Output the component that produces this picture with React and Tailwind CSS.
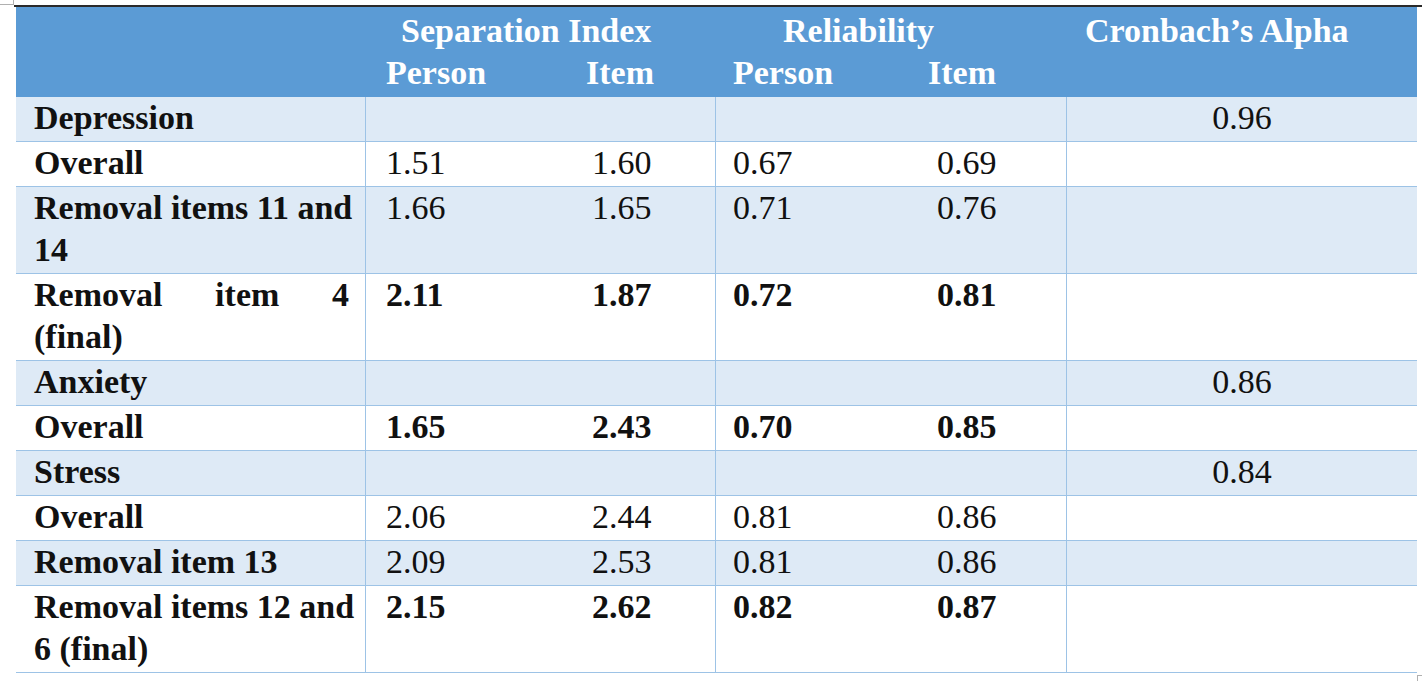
import React from 'react';

const rows = [
  { label: ['Depression'], light: true, alpha: '0.96' },
  { label: ['Overall'], vals: ['1.51', '1.60', '0.67', '0.69'] },
  { label: ['Removal items 11 and', '14'], light: true, vals: ['1.66', '1.65', '0.71', '0.76'] },
  { label: ['Removal item 4', '(final)'], justify: true, bold: true, vals: ['2.11', '1.87', '0.72', '0.81'] },
  { label: ['Anxiety'], light: true, alpha: '0.86' },
  { label: ['Overall'], bold: true, vals: ['1.65', '2.43', '0.70', '0.85'] },
  { label: ['Stress'], light: true, alpha: '0.84' },
  { label: ['Overall'], vals: ['2.06', '2.44', '0.81', '0.86'] },
  { label: ['Removal item 13'], light: true, vals: ['2.09', '2.53', '0.81', '0.86'] },
  { label: ['Removal items 12 and', '6 (final)'], bold: true, vals: ['2.15', '2.62', '0.82', '0.87'] },
];

const Row = ({ row }) => {
  const numClass = row.bold ? 'font-bold' : 'font-normal';
  return (
    <div className={`flex border-b border-[#9dc3e6] ${row.light ? 'bg-[#deeaf6]' : 'bg-white'}`}>
      {/* Label */}
      <div className="w-[350px] shrink-0 border-r border-[#9dc3e6] pl-[18px] pr-[16px] pb-[2px] font-bold">
        {row.justify ? (
          <>
            <div className="flex justify-between">
              <span>Removal</span>
              <span>item</span>
              <span>4</span>
            </div>
            <div>{row.label[1]}</div>
          </>
        ) : (
          row.label.map((l, i) => (
            <div key={i} className="whitespace-nowrap">{l}</div>
          ))
        )}
      </div>

      {/* Separation Index */}
      <div className={`w-[350px] shrink-0 border-r border-[#9dc3e6] pb-[2px] flex pl-[20px] ${numClass}`}>
        {row.vals && (
          <>
            <span className="w-[206px]">{row.vals[0]}</span>
            <span>{row.vals[1]}</span>
          </>
        )}
      </div>

      {/* Reliability */}
      <div className={`w-[351px] shrink-0 border-r border-[#9dc3e6] pb-[2px] flex pl-[17px] ${numClass}`}>
        {row.vals && (
          <>
            <span className="w-[204px]">{row.vals[2]}</span>
            <span>{row.vals[3]}</span>
          </>
        )}
      </div>

      {/* Cronbach */}
      <div className="w-[350px] shrink-0 pb-[2px] text-center">
        {row.alpha}
      </div>
    </div>
  );
};

const App = () => {
  return (
    <div className="relative w-[1424px] h-[681px] bg-white overflow-hidden text-[34px] leading-[42px] text-[#111] font-['Liberation_Serif',serif]">
      {/* table move handle */}
      <div className="absolute left-0 top-0 w-[14px] h-[5px] border-r border-b border-[#b0b0b0]"></div>
      <div className="absolute right-[2px] bottom-[0px] w-[5px] h-[6px] border-l border-t border-[#b0b0b0]"></div>

      <div className="pt-[5px]">
        <div className="ml-[14px] w-[1408px] h-[2px] bg-[#2a2a2a]"></div>

        <div className="ml-[16px] w-[1401px]">
          {/* Header */}
          <div className="flex h-[90px] bg-[#5b9bd5] text-white font-bold pt-[3px]">
            <div className="w-[350px] shrink-0"></div>
            <div className="w-[350px] shrink-0">
              <div className="pl-[35px] whitespace-nowrap">Separation Index</div>
              <div className="flex pl-[20px]">
                <span className="w-[200px]">Person</span>
                <span>Item</span>
              </div>
            </div>
            <div className="w-[351px] shrink-0">
              <div className="pl-[67px]">Reliability</div>
              <div className="flex pl-[17px]">
                <span className="w-[195px]">Person</span>
                <span>Item</span>
              </div>
            </div>
            <div className="w-[350px] shrink-0 pl-[18px] whitespace-nowrap">Cronbach’s Alpha</div>
          </div>

          {rows.map((row, i) => (
            <Row key={i} row={row} />
          ))}
        </div>
      </div>
    </div>
  );
};

export default App;
